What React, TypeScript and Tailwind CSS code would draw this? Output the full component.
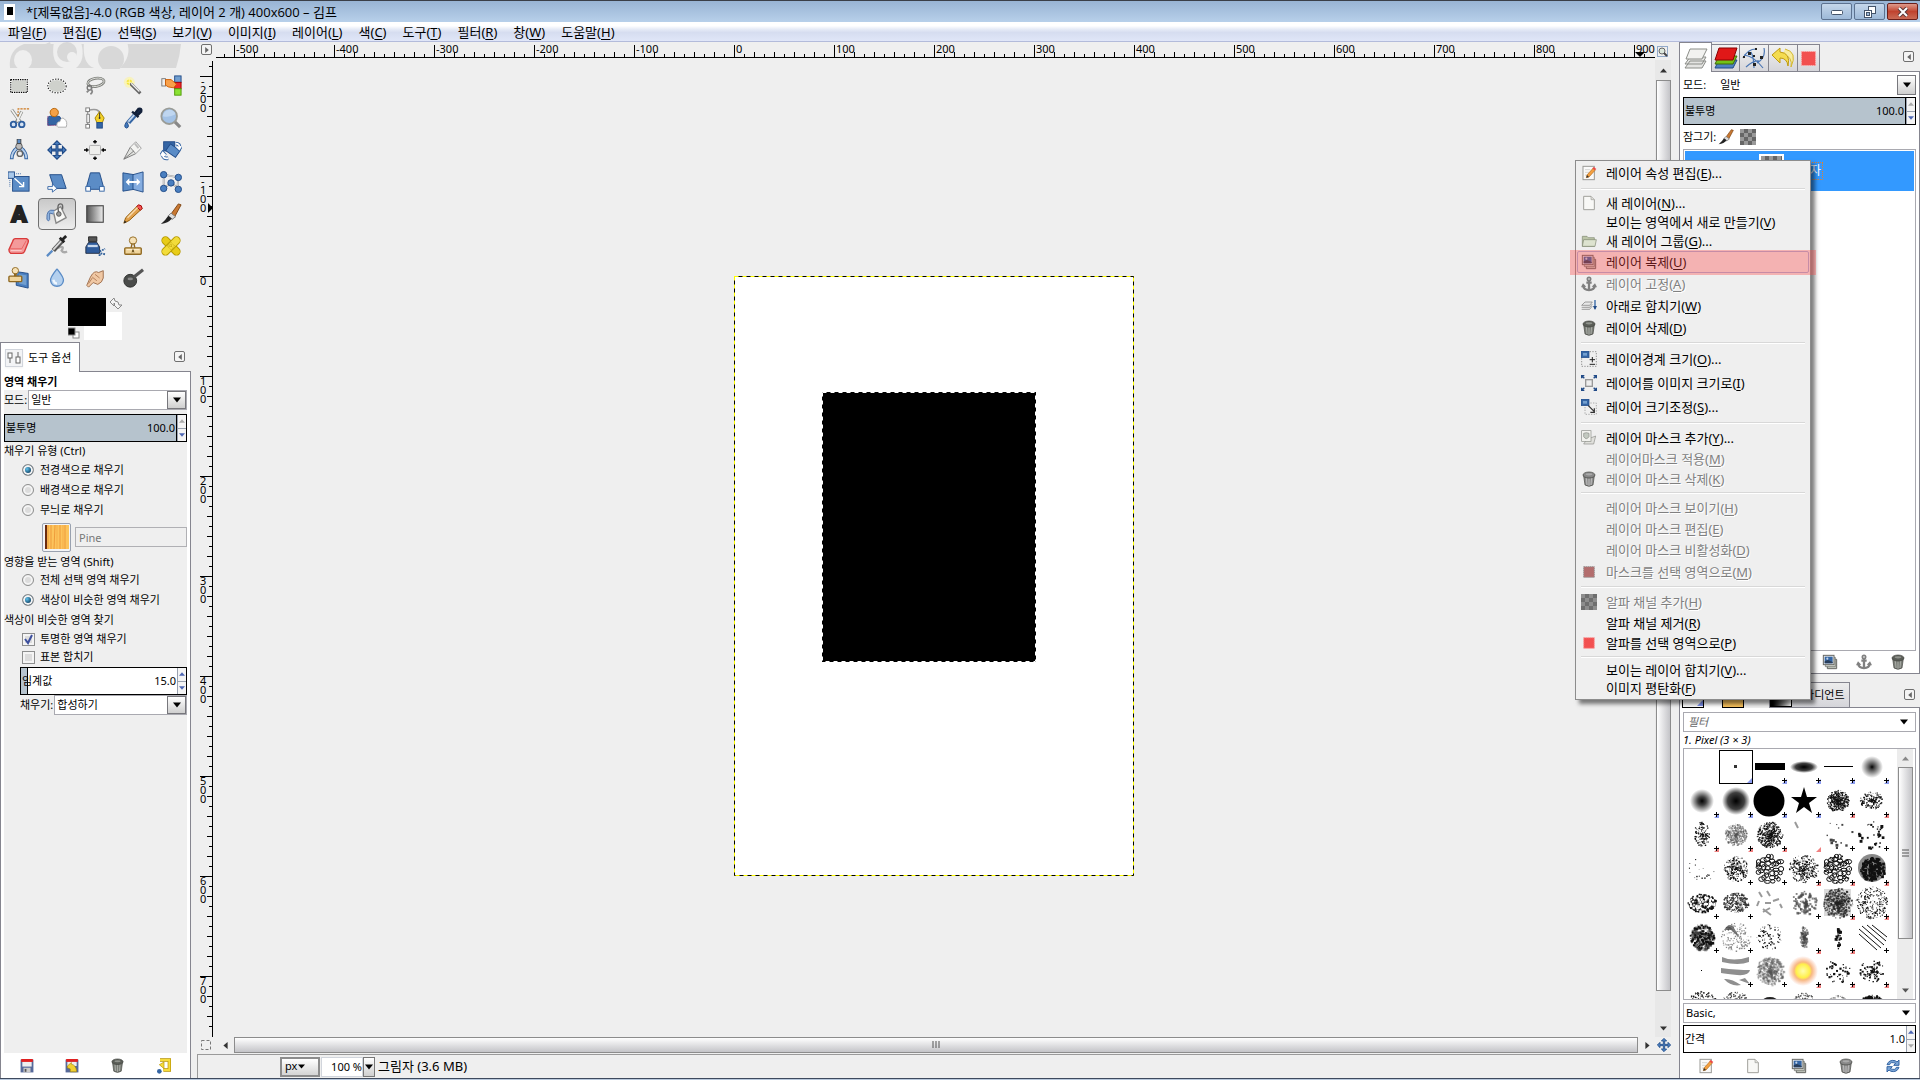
import React from 'react';

type Kids = { children: React.ReactNode };

const Svg: React.FC<Kids & { size?: number }> = ({ children, size = 24 }) => (
  <svg width={size} height={size} viewBox="0 0 24 24" fill="none" className="shrink-0" aria-hidden="true">
    {children}
  </svg>
);

/* ---------- small shared icons ---------- */

const TrashIcon: React.FC<{ size?: number; dim?: boolean }> = ({ size = 16, dim }) => (
  <Svg size={size}>
    <path d="M4 7 L6 21 Q12 25 18 21 L20 7 Z" fill={dim ? '#8f8f8f' : '#7b7e78'} stroke="#3f413d" />
    <path d="M8 10 L9 21 M12 11 V22 M16 10 L15 21" stroke={dim ? '#bbb' : '#a8aba5'} strokeWidth="1.500" />
    <ellipse cx="12" cy="6" rx="9" ry="4.500" fill={dim ? '#888' : '#5a5d57'} stroke="#3f413d" />
    <ellipse cx="12" cy="5" rx="5" ry="1.600" fill={dim ? '#aaa' : '#8f928c'} />
  </Svg>
);

const DuplicateIcon = () => (
  <Svg size={16}>
    <path d="M8 8 H22 V22 H8 Z" fill="#c3c7bf" stroke="#666864" strokeWidth="1.500" />
    <path d="M5 5 H20 V19 H5 Z" fill="#d3d7cf" stroke="#666864" />
    <rect x="2" y="2" width="16" height="14" fill="#eeeeec" stroke="#666864" strokeWidth="1.500" />
    <rect x="4" y="4" width="12" height="10" fill="#3465a4" />
    <path d="M4 11 L9 9 L16 12 V14 H4 Z" fill="#2a3f5c" />
    <circle cx="8" cy="7" r="1.600" fill="#c5d6ea" />
  </Svg>
);

const AnchorIcon = () => (
  <Svg size={16}>
    <circle cx="12" cy="4.500" r="2.500" stroke="#808080" strokeWidth="2.500" />
    <path d="M12 7 V21 M8 10 H16 M3 14 Q4 21 12 21 Q20 21 21 14" stroke="#808080" strokeWidth="3.500" />
    <path d="M0 17 L3 11 L8 16 Z M24 17 L21 11 L16 16 Z" fill="#808080" />
  </Svg>
);

const EditIcon = () => (
  <Svg size={16}>
    <rect x="3" y="2" width="17" height="20" fill="#fafafa" stroke="#9a9a96" strokeWidth="1.500" />
    <path d="M6 7 H14 M6 11 H12 M6 15 H10" stroke="#c4c4c0" />
    <path d="M8 19 L9 15 L18 5 L21 8 L12 18 Z" fill="#f5a040" stroke="#b06a1a" />
    <path d="M17 5 L19 3 L23 6 L21 8 Z" fill="#ef4444" />
    <path d="M8 19 L9 15 L12 18 Z" fill="#333" />
  </Svg>
);

const NewIcon = () => (
  <Svg size={16}>
    <path d="M4 2 H15 L20 7 V22 H4 Z" fill="#f8f8f6" stroke="#a0a09c" strokeWidth="1.500" />
    <path d="M15 2 V7 H20" fill="#dcdcd8" stroke="#a0a09c" />
  </Svg>
);

const FolderIcon = () => (
  <Svg size={16}>
    <path d="M2 5 H9 L11 7 H20 V20 H2 Z" fill="#bcc5a8" stroke="#7e8670" />
    <path d="M4 10 H23 L21 20 H2 Z" fill="#dde3cf" stroke="#7e8670" />
  </Svg>
);

const MergeIcon = () => (
  <Svg size={16}>
    <path d="M6 6 H17 L13 11 H1 Z M1 14 H13 L17 9 M1 17 H13 L17 12" fill="#e8e8e8" stroke="#777" />
    <path d="M21 3 V16" stroke="#3465a4" strokeWidth="2" />
    <path d="M18 12 H24 L21 18 Z" fill="#204a87" />
  </Svg>
);

const BoundsIcon = () => (
  <Svg size={16}>
    <rect x="1" y="1" width="22" height="22" stroke="#666" strokeDasharray="2 2" />
    <rect x="0" y="0" width="12" height="10" fill="#3465a4" stroke="#204a87" />
    <rect x="3" y="3" width="6" height="4" fill="#729fcf" />
    <path d="M17 9 V17 M13 13 H21 M13 20 H21" stroke="#222" strokeWidth="1.500" />
  </Svg>
);

const FitIcon = () => (
  <Svg size={16}>
    <path d="M1 5 V1 H5 M19 1 H23 V5 M23 19 V23 H19 M5 23 H1 V19 M1 1 L5 5 M23 1 L19 5 M23 23 L19 19 M1 23 L5 19" stroke="#204a87" strokeWidth="2" />
    <rect x="7" y="7" width="10" height="10" fill="#eee" stroke="#999" strokeWidth="2" />
  </Svg>
);

const ResizeIcon = () => (
  <Svg size={16}>
    <rect x="6" y="6" width="17" height="17" stroke="#888" strokeDasharray="2 2" />
    <rect x="0" y="0" width="12" height="10" fill="#3465a4" stroke="#204a87" />
    <rect x="3" y="3" width="6" height="4" fill="#729fcf" />
    <path d="M11 10 L20 19 M20 14 V20 H14" stroke="#333" strokeWidth="1.800" />
  </Svg>
);

const MaskIcon = () => (
  <Svg size={16}>
    <path d="M9 14 L22 9 L19 21 H4 Z" fill="#e0e0dc" stroke="#8b8d88" />
    <rect x="1" y="1" width="14" height="16" fill="#f2f2ee" stroke="#8b8d88" />
    <path d="M4 5 Q8 3 12 5 V10 Q8 16 4 10 Z" fill="#c3c9c0" stroke="#8b8d88" />
  </Svg>
);

const SelIcon: React.FC<{ dim?: boolean }> = ({ dim }) => (
  <Svg size={16}>
    <rect x="4" y="4" width="16" height="16" fill={dim ? '#b36d6d' : '#f25050'} stroke={dim ? '#999' : '#f9a0a0'} strokeWidth="1.500" strokeDasharray="2 1" />
  </Svg>
);

const CheckerIcon: React.FC<{ dim?: boolean }> = ({ dim }) => (
  <svg width="16" height="16" viewBox="0 0 8 8" className="shrink-0" aria-hidden="true">
    <rect width="8" height="8" fill={dim ? '#8d8d8d' : '#999'} />
    {Array.from({ length: 16 }).map((_, i) =>
      (i + (i >> 2)) % 2 ? <rect key={i} x={(i % 4) * 2} y={(i >> 2) * 2} width="2" height="2" fill={dim ? '#6e6e6e' : '#666'} /> : null
    )}
  </svg>
);

/* ---------- toolbox ---------- */

const blue = '#5b8cc6';
const navy = '#204a87';

const tools: { name: string; art: React.ReactNode }[] = [
  { name: '사각 선택', art: <><rect x="3" y="5" width="18" height="14" fill="#cfd1cc" stroke="#fff" strokeWidth="2" /><rect x="3" y="5" width="18" height="14" stroke="#000" strokeWidth="1.200" strokeDasharray="1.500 1" /></> },
  { name: '타원 선택', art: <><ellipse cx="12" cy="12" rx="10" ry="7.500" fill="#cfd1cc" stroke="#fff" strokeWidth="2" /><ellipse cx="12" cy="12" rx="10" ry="7.500" stroke="#222" strokeWidth="1.200" strokeDasharray="1.500 1.500" /></> },
  { name: '자유 선택', art: <><ellipse cx="13" cy="8" rx="9" ry="4.500" transform="rotate(-10 13 8)" stroke="#7d7f7a" strokeWidth="3" /><ellipse cx="13" cy="8" rx="9" ry="4.500" transform="rotate(-10 13 8)" stroke="#dfe0dc" /><circle cx="6" cy="14" r="2.500" stroke="#777" strokeWidth="1.500" /><path d="M6 16 L3 19 M7 15 Q11 18 7 21" stroke="#888" strokeWidth="2" /></> },
  { name: '퍼지 선택', art: <><circle cx="8" cy="8" r="6" fill="#fcf3a0" opacity=".6" /><circle cx="8" cy="8" r="3" fill="#f6e43c" /><path d="M9 9 L20 20" stroke="#666" strokeWidth="3.500" /><path d="M10 9 L19 18" stroke="#eee" strokeWidth="1.500" /><path d="M3 8 H13 M8 3 V13" stroke="#fff9a6" /></> },
  { name: '색상 선택', art: <><rect x="16" y="1" width="7" height="7" fill="#729fcf" stroke={navy} /><rect x="16" y="8" width="7" height="7" fill="#ef2929" stroke="#a40000" /><rect x="16" y="15" width="7" height="7" fill="#8ae234" stroke="#4e9a06" /><rect x="2" y="4" width="4" height="8" fill="#eee" stroke="#777" /><path d="M6 5 L12 5 L18 10 L15 14 L9 13 L6 11 Z" fill="#f8a04a" stroke="#ce5c00" /></> },
  { name: '가위 선택', art: <><path d="M4 3 L14 17 M15 5 L9 17" stroke="#8a8c87" strokeWidth="3.500" /><path d="M4 3 L13 16 M15 5 L10 16" stroke="#f2f2f0" strokeWidth="1.800" /><circle cx="6" cy="19" r="3" fill="#d6e3f3" stroke="#2f5f9f" strokeWidth="2" /><circle cx="15" cy="19" r="3" fill="#d6e3f3" stroke="#2f5f9f" strokeWidth="2" /><path d="M11 10 V2 H23" stroke="#ce7a20" strokeWidth="1.200" strokeDasharray="2.500 1" /></> },
  { name: '전경 선택', art: <><path d="M2 20 V12 Q2 10 5 10 H13 Q16 10 16 13 V19 Z" fill="#3465a4" stroke={navy} /><circle cx="9" cy="6" r="4.500" fill="#f5a146" stroke="#b35f00" /><path d="M12 21 Q11 16 15 16 Q17 10 20 13 Q24 16 22 22 H13 Z" fill="#fff" stroke="#aaa" /><path d="M2 20 H12 M2 10 V20" stroke="#a4508a" strokeDasharray="1.500 1" /></> },
  { name: '경로', art: <><path d="M4 4 V20 M4 4 Q16 0 18 8" stroke="#999" strokeWidth="1.500" /><rect x="2" y="1" width="4" height="4" fill="#fff" stroke="#777" /><rect x="2" y="19" width="4" height="4" fill="#fff" stroke="#777" /><rect x="3" y="8" width="3" height="9" fill="#eee" stroke="#888" /><path d="M17 5 L22 12 L20 17 H14 L12 12 Z" fill="#f4d22a" stroke="#a08000" /><path d="M17 6 V12" stroke="#333" /><circle cx="17" cy="12" r="1" fill="#333" /><rect x="14" y="17" width="6" height="6" fill="#3465a4" stroke={navy} /></> },
  { name: '색 추출', art: <><path d="M14 9 L7 17" stroke="#3465a4" strokeWidth="5" /><path d="M14 8 L7 16" stroke="#c3d7ef" strokeWidth="2" /><path d="M11 5 L18 11 M14 7 L18 2 Q22 1 21 5 L17 9 Z" fill="#1a2b4a" stroke="#12203a" strokeWidth="2.500" /><path d="M5 16 Q1 22 5 23 Q9 22 5 16" fill="#3f78bd" stroke={navy} /></> },
  { name: '확대', art: <><path d="M16 16 L22 22" stroke="#888" strokeWidth="3.500" /><circle cx="10" cy="10" r="8.500" fill="#a3c2e6" stroke="#9a9c97" strokeWidth="2" /><path d="M3 10 Q10 12 17 8 Q15 3 10 3 Q4 4 3 10" fill="#bfd6f0" /></> },
  { name: '측정', art: <><path d="M11 9 Q4 14 4 22 M13 9 Q20 14 20 22" stroke="#3465a4" strokeWidth="4" /><path d="M11 9 Q4 14 4 21 M13 9 Q20 14 20 21" stroke="#b8cfea" strokeWidth="2" /><circle cx="12" cy="8" r="3.500" fill="#bbb" stroke="#555" /><rect x="10" y="0" width="4" height="5" fill={blue} stroke="#444" /><circle cx="13" cy="16" r="3" fill="#eee" stroke="#666" strokeWidth="1.500" /></> },
  { name: '이동', art: <><path d="M12 2 L16 6 H13 V11 H18 V8 L22 12 L18 16 V13 H13 V18 H16 L12 22 L8 18 H11 V13 H6 V16 L2 12 L6 8 V11 H11 V6 H8 Z" fill="#4a7fc0" stroke={navy} strokeWidth="1.200" /></> },
  { name: '정렬', art: <><rect x="6" y="7" width="12" height="10" rx="1" fill="#eeeeec" stroke="#aaa" /><path d="M12 1 V5 M10 3 H14 M12 19 V23 M10 21 H14 M0 12 H5 M3 10 V14 M19 12 H24 M21 10 V14" stroke="#000" strokeWidth="1.500" /></> },
  { name: '자르기', art: <><path d="M2 22 L9 9 L15 16 Z" fill="#e2e3e0" stroke="#777" /><path d="M9 9 L15 3 L21 10 L15 16 Z" fill="#f4f4f2" stroke="#999" /><path d="M2 22 L13 13" stroke="#777" /><path d="M14 5 L18 10" stroke="#bbb" strokeWidth="2" /></> },
  { name: '회전', art: <><rect x="4" y="3" width="12" height="10" fill="#3465a4" stroke={navy} /><rect x="8" y="8" width="13" height="9" transform="rotate(35 14 12)" fill={blue} stroke={navy} /><path d="M17 5 Q22 5 21 10 M18 8 L21 11 L23 8 M9 21 Q3 22 3 17 M1 18 L3 15 L6 18" stroke="#3465a4" strokeWidth="4" /><path d="M17 5 Q22 5 21 10 M18 8 L21 11 L23 8 M9 21 Q3 22 3 17 M1 18 L3 15 L6 18" stroke="#fff" strokeWidth="2" /></> },
  { name: '크기', art: <><rect x="5" y="6" width="18" height="16" fill={blue} stroke={navy} /><rect x="0" y="1" width="7" height="7" fill="#a9c8ea" stroke={navy} /><path d="M7 8 L17 17 M17 12 V17 H12" stroke="#fff" strokeWidth="1.500" /><path d="M9 3 H15 M2 10 V17" stroke="#3465a4" strokeDasharray="1 1" /></> },
  { name: '기울이기', art: <><path d="M4 4 H17 L22 19 H9 Z" fill={blue} stroke={navy} /><path d="M2 17 H7 V14 L12 19 L7 23 V20 H2 Z" fill="#fff" stroke="#3465a4" /></> },
  { name: '원근', art: <><path d="M7 2 H17 L22 20 H2 Z" fill={blue} stroke={navy} /><rect x="2" y="17" width="5" height="5" fill="#fff" stroke="#3465a4" /><rect x="17" y="17" width="5" height="5" fill="#fff" stroke="#3465a4" /></> },
  { name: '뒤집기', art: <><path d="M1 2 L13 4 V20 L1 22 Z" fill={blue} stroke={navy} /><path d="M12 4 L23 1 V23 L12 20 Z" fill="#85ade0" stroke={navy} /><path d="M4 12 L8 8 V11 H16 V8 L20 12 L16 16 V13 H8 V16 Z" fill="#fff" /></> },
  { name: '케이지', art: <><path d="M4 4 L20 7 L19 18 L12 13 L4 19 Z" stroke="#999" strokeWidth="2" /><path d="M4 4 L20 7 L19 18 L12 13 L4 19 Z" stroke="#ddd" /><circle cx="4" cy="4" r="3.500" fill="#4a7fc0" stroke={navy} /><circle cx="20" cy="7" r="3.500" fill="#4a7fc0" stroke={navy} /><circle cx="12" cy="13" r="3.500" fill="#4a7fc0" stroke={navy} /><circle cx="4" cy="19" r="3.500" fill="#4a7fc0" stroke={navy} /><circle cx="20" cy="20" r="3.500" fill="#4a7fc0" stroke={navy} /></> },
  { name: '텍스트', art: <text x="12" y="21" textAnchor="middle" fontSize="25" fontWeight="900" fontFamily="Roboto, sans-serif" fill="#222" stroke="#222" strokeWidth="2">A</text> },
  { name: '영역 채우기', art: <><path d="M8 9 L16 4 L22 16 L11 22 Z" fill="#f8f8f6" stroke="#888" strokeWidth="1.500" /><path d="M14 12 L13 5 Q13 1 16 1 Q19 1 18 7" stroke="#666" strokeWidth="1.500" /><circle cx="14" cy="12" r="2.500" fill="#999" stroke="#555" /><path d="M9 8 Q0 6 1 18 Q3 21 4 18 V11 L8 12" fill="#8fb3df" stroke="#4a6fa5" /></> },
  { name: '혼합', art: <><defs><linearGradient id="toolGrad"><stop stopColor="#555" /><stop offset="1" stopColor="#eee" /></linearGradient></defs><rect x="3" y="3" width="18" height="18" fill="url(#toolGrad)" stroke="#444" strokeWidth="1.200" /></> },
  { name: '연필', art: <><path d="M2 22 L4 16 L17 3 Q20 2 22 6 L8 19 Z" fill="#e0a04c" stroke="#8f5902" /><path d="M16 4 L20 8 L22 6 Q22 2 18 2 Z" fill="#ef5555" stroke="#a40000" /><path d="M2 22 L3 19 L5 21 Z" fill="#222" /><path d="M6 16 L17 5" stroke="#f8dcae" strokeWidth="1.500" /></> },
  { name: '붓', art: <><path d="M12 12 L20 1 L23 2 L16 15 Z" fill="#c87832" stroke="#7c4310" /><path d="M9 14 L12 11 L17 15 L13 18 Z" fill="#ddd" stroke="#777" /><path d="M9 14 L13 17 Q9 22 1 23 Q6 19 9 14" fill="#222" /></> },
  { name: '지우개', art: <><path d="M8 4 H20 Q23 5 22 8 L18 18 Q17 20 15 20 H3 Q1 19 1 16 L5 7 Q6 4 8 4" fill="#f49a9a" stroke="#d83a3a" strokeWidth="1.500" /><path d="M2 15 H15 L20 6" stroke="#e86060" /><path d="M3 17 H15" stroke="#fbd0d0" /></> },
  { name: '에어브러시', art: <><path d="M13 14 Q21 11 17 17 Q19 20 23 18" stroke="#aaa" strokeWidth="2.500" /><path d="M8 17 L18 6" stroke="#555" strokeWidth="5" /><path d="M8 16 L18 5" stroke="#d8d8d8" strokeWidth="2" /><path d="M15 3 L20 8 M17 6 L22 1" stroke="#222" strokeWidth="3" /><path d="M7 17 L1 23" stroke="#5b8cc6" strokeWidth="2.500" /></> },
  { name: '잉크', art: <><path d="M5 2 H14 V7 H5 Z" fill="#555" stroke="#222" /><path d="M5 8 H14 L17 13 V20 H2 V13 Z" fill="#2f5c9c" stroke="#222e44" /><path d="M4 12 H15" stroke="#c8d8ed" strokeWidth="2.500" /><path d="M17 18 L23 15 M18 20 L23 21 M16 22 H19" stroke="#2f5f9a" strokeWidth="2" strokeDasharray="2 1" /></> },
  { name: '복제', art: <><circle cx="12" cy="6" r="4" fill="#f6e2b8" stroke="#8f6820" /><path d="M11 9 L10 14 M13 9 L14 14" stroke="#8f6820" strokeWidth="1.500" /><rect x="3" y="14" width="18" height="7" rx="1" fill="#f0d59c" stroke="#8f6820" strokeWidth="1.500" /><path d="M5 16 H19" stroke="#fff3d6" /><path d="M11 19 L12 16 L13 19" stroke="#5a3f0c" /></> },
  { name: '치료', art: <><path d="M6 6 L18 18" stroke="#b79a00" strokeWidth="9" strokeLinecap="round" /><path d="M6 6 L18 18" stroke="#e8cc18" strokeWidth="7" strokeLinecap="round" /><path d="M18 6 L6 18" stroke="#b79a00" strokeWidth="9" strokeLinecap="round" /><path d="M18 6 L6 18" stroke="#f2dc3a" strokeWidth="7" strokeLinecap="round" /><path d="M8 12 L12 8 L16 12 L12 16 Z M10 12 H14 M12 10 V14" stroke="#b79a00" strokeDasharray="1 1" /></> },
  { name: '원근 복제', art: <><path d="M9 5 L22 7 V23 L9 20 V14" fill="#4a7fc0" stroke={navy} /><path d="M12 8 L20 9 V20 L12 18" fill="#729fcf" /><circle cx="8" cy="4" r="3.500" fill="#f6e2b8" stroke="#8f6820" /><path d="M8 7 V11" stroke="#8f6820" strokeWidth="3" /><rect x="1" y="10" width="14" height="6" rx="1" fill="#f0d59c" stroke="#8f6820" strokeWidth="1.500" /></> },
  { name: '흐리기', art: <><path d="M12 2 Q20 12 19 15 Q18 21 12 21 Q6 21 5 15 Q4 12 12 2" fill="#b4d0ee" stroke="#5b8cc6" strokeWidth="1.500" /><path d="M8 14 Q9 18 12 18" stroke="#f0f7ff" strokeWidth="2.500" /></> },
  { name: '문지르기', art: <><path d="M3 20 L7 11 Q11 3 16 6 L21 4 L21 12 Q20 17 15 19 L10 17 L5 22 Z" fill="#f0c8a4" stroke="#9b6a48" /><path d="M9 11 L14 15 M12 8 L17 12 M5 18 L9 12" stroke="#b07c58" /></> },
  { name: '닷지', art: <><circle cx="9" cy="15" r="7" fill="#4a4c4a" stroke="#2c2e2c" /><path d="M13 11 L23 3" stroke="#555" strokeWidth="3.500" /><ellipse cx="9" cy="13" rx="3" ry="1.500" fill="#888" /></> },
];

/* ---------- form bits ---------- */

const Arrow: React.FC<{ dir?: 'up' | 'down' | 'left' | 'right'; color?: string; size?: number }> = ({ dir = 'down', color = '#000', size = 10 }) => {
  const d = { down: 'M0 2 H10 L5 8 Z', up: 'M0 8 H10 L5 2 Z', left: 'M8 0 V10 L2 5 Z', right: 'M2 0 V10 L8 5 Z' }[dir];
  return (
    <svg width={size} height={size} viewBox="0 0 10 10" className="shrink-0" aria-hidden="true">
      <path d={d} fill={color} />
    </svg>
  );
};

const Spin: React.FC<{ label: string; value: string; fill?: string; upColor?: string; downColor?: string }> = ({
  label, value, fill = '', upColor = '#4d66b3', downColor = '#4d66b3',
}) => (
  <label className="flex h-7 flex-1 min-w-0 border border-black bg-white">
    <span className={`flex flex-1 min-w-0 items-center pl-px pr-px ${fill}`}>
      <span className="whitespace-nowrap">{label}</span>
      <input className="w-full min-w-0 bg-transparent text-right outline-none" defaultValue={value} />
    </span>
    <span className="flex w-[9px] flex-col border-l border-gray-400 bg-[#f4f4f4]">
      <button aria-label="증가" className="flex flex-1 items-center justify-center border-b border-gray-400"><Arrow dir="up" size={6} color={upColor} /></button>
      <button aria-label="감소" className="flex flex-1 items-center justify-center"><Arrow size={6} color={downColor} /></button>
    </span>
  </label>
);

const Combo: React.FC<{ id: string; value: string; boxed?: boolean; framed?: boolean }> = ({ id, value, boxed = true, framed = true }) => (
  <div className={`grid h-5 min-w-0 flex-1 bg-white ${framed ? 'border border-[#a9a9b0]' : ''}`}>
    <select id={id} aria-label={value} className="col-start-1 row-start-1 w-full appearance-none bg-transparent pl-[2px] outline-none">
      <option>{value}</option>
    </select>
    <span className={`pointer-events-none col-start-1 row-start-1 flex w-[19px] items-center justify-center justify-self-end ${boxed ? 'border border-[#77777c] bg-linear-to-b from-white to-[#cfcfcf]' : ''}`}>
      <Arrow size={8} />
    </span>
  </div>
);

const Radio: React.FC<{ name: string; label: string; on?: boolean }> = ({ name, label, on }) => (
  <label className="flex h-5 items-center gap-[6px] pl-[18px]">
    <input
      type="radio" name={name} defaultChecked={on}
      className="h-3 w-3 appearance-none rounded-full border border-[#8e8f8f] bg-[#dcdcdc] inset-ring-2 inset-ring-[#f4f4f4] checked:bg-[radial-gradient(circle_at_40%_40%,#5fc3ee,#0a3556_60%)]"
    />
    {label}
  </label>
);

const Check: React.FC<{ label: string; on?: boolean }> = ({ label, on }) => (
  <label className="flex h-[18px] items-center gap-[5px] pl-[18px]">
    <span className="grid h-[13px] w-[13px]">
      <input type="checkbox" defaultChecked={on} className="col-start-1 row-start-1 h-[13px] w-[13px] appearance-none border border-[#8e8f8f] bg-[#dcdcdc] inset-ring-2 inset-ring-[#f4f4f4]" />
      {on && (
        <svg viewBox="0 0 13 13" className="pointer-events-none col-start-1 row-start-1" aria-hidden="true">
          <path d="M3 6 L6 10 L10 2" fill="none" stroke="#3c4f9e" strokeWidth="2" />
        </svg>
      )}
    </span>
    {label}
  </label>
);

const Collapse: React.FC<{ dir?: 'left' | 'right' }> = ({ dir = 'left' }) => (
  <button aria-label="탭 메뉴" className="flex h-[11px] w-[11px] items-center justify-center rounded-xs border border-[#6f6f6f] bg-[#f4f4f4]">
    <Arrow dir={dir} size={6} color="#666" />
  </button>
);

/* ---------- left dock ---------- */

const LeftDock = () => (
  <aside className="flex w-[191px] shrink-0 flex-col text-[11px]">
    <svg width="191" height="27" viewBox="0 0 191 27" aria-hidden="true">
      <path d="M10 26 Q8 8 24 2 H181 Q180 14 176 26 Z" fill="#d8d8d8" />
      <ellipse cx="23" cy="18" rx="9" ry="10" fill="#efefef" />
      <path d="M40 26 Q33 18 32 8 L50 0 L54 12 Q56 22 64 26 Z" fill="#d8d8d8" />
      <path d="M54 0 Q50 22 64 26 H76 Q86 18 81 0 Z" fill="#efefef" />
      <circle cx="67" cy="10" r="10" fill="#d8d8d8" />
      <circle cx="72" cy="15" r="5" fill="#efefef" />
      <path d="M84 0 Q82 22 94 26 H120 Q132 14 127 0 Z" fill="#efefef" />
      <circle cx="111" cy="17" r="13" fill="#d8d8d8" />
    </svg>
    <div className="grid h-[228px] w-[190px] grid-cols-5 auto-rows-[32px] pt-[1px]">
      {tools.map((tool) => (
        <button
          key={tool.name}
          aria-label={tool.name}
          className={`flex items-center justify-center ${tool.name === '영역 채우기' ? 'rounded border border-[#707070] bg-linear-to-b from-[#c9c9c9] to-[#ededed]' : ''}`}
        >
          <Svg size={22}>{tool.art}</Svg>
        </button>
      ))}
    </div>
    <div className="h-[45px] pl-[68px]">
      <svg width="56" height="44" viewBox="0 0 56 44" aria-hidden="true">
        <rect x="16" y="15" width="38" height="28" fill="#fff" />
        <rect x="0" y="1" width="38" height="28" fill="#000" />
        <path d="M42 5 L46 1 L47 4 Q51 4 51 8 L54 8 L50 12 L46 8 Q48 7 46 6 L46 9 Z" fill="#f4f4f4" stroke="#888" />
        <rect x="5" y="35" width="6" height="6" fill="#fff" stroke="#888" />
        <rect x="0" y="31" width="7" height="7" fill="#000" stroke="#888" />
      </svg>
    </div>

    <div className="flex h-[30px] shrink-0 items-stretch">
      <div className="flex w-20 items-center gap-1 border-x border-t border-[#85858f] bg-white pl-1 pt-px">
        <span className="flex h-[18px] w-[18px] items-center justify-center border border-gray-300 bg-gray-100 shadow-xs">
          <svg width="14" height="14" viewBox="0 0 14 14" fill="#fff" stroke="#666" aria-hidden="true">
            <rect x="1" y="2" width="4" height="5" /><path d="M3 7 V12" /><rect x="9" y="6" width="4" height="6" /><path d="M11 6 V1" />
          </svg>
        </span>
        <span className="whitespace-nowrap pl-px">도구 옵션</span>
      </div>
      <div className="flex flex-1 items-center justify-end border-b border-[#85858f] pr-[6px]"><Collapse /></div>
    </div>

    <section className="flex min-h-0 flex-1 flex-col border-x border-[#85858f] bg-white px-[3px]">
      <h2 className="h-[18px] pt-[2px] font-bold leading-4">영역 채우기</h2>
      <div className="flex min-h-0 flex-1 flex-col bg-[#efefef] leading-4">
        <div className="flex h-5 items-center gap-px">
          <label htmlFor="mode">모드:</label>
          <Combo id="mode" value="일반" />
        </div>
        <div className="mt-1 flex"><Spin label="불투명" value="100.0" fill="bg-[#b6c3cd] border-r border-black" upColor="#aaa" /></div>
        <fieldset className="min-w-0">
          <legend className="h-[18px] pt-px">채우기 유형 (Ctrl)</legend>
          <Radio name="fill" label="전경색으로 채우기" on />
          <Radio name="fill" label="배경색으로 채우기" />
          <Radio name="fill" label="무늬로 채우기" />
          <div className="flex h-[34px] items-center gap-1 pl-[38px]">
            <button aria-label="무늬" className="flex h-[29px] w-[29px] shrink-0 items-center justify-center rounded-xs border border-gray-400 bg-gray-100">
              <svg width="24" height="24" viewBox="0 0 24 24" aria-hidden="true">
                <rect width="24" height="24" fill="#fcc45c" />
                <rect width="2" height="24" fill="#6a2c10" />
                <path d="M3 0 V24 M6 0 V24 M10 0 L9 24 M15 0 V24 M20 0 V24" stroke="#ee9a3a" />
                <path d="M12 0 V24 M18 0 V24" stroke="#f7ad48" />
              </svg>
            </button>
            <input aria-label="무늬 이름" defaultValue="Pine" className="h-5 w-full min-w-0 flex-1 border border-[#b0b0b4] bg-transparent pl-[3px] text-[#777] outline-none" />
          </div>
        </fieldset>
        <fieldset className="min-w-0">
          <legend className="h-4">영향을 받는 영역 (Shift)</legend>
          <Radio name="area" label="전체 선택 영역 채우기" />
          <Radio name="area" label="색상이 비슷한 영역 채우기" on />
        </fieldset>
        <p className="h-5 pt-[2px]">색상이 비슷한 영역 찾기</p>
        <Check label="투명한 영역 채우기" on />
        <Check label="표본 합치기" />
        <div className="mt-px flex pl-4"><Spin label="임계값" value="15.0" fill="bg-[linear-gradient(to_right,#b6c3cd_6px,#000_6px,#000_7px,#fff_7px)]" /></div>
        <div className="flex h-5 items-center gap-px pl-4">
          <label htmlFor="fillby">채우기:</label>
          <Combo id="fillby" value="합성하기" />
        </div>
      </div>
      <div className="flex h-[25px] shrink-0 items-center justify-around">
        <button aria-label="저장">
          <Svg size={14}><rect x="1" y="1" width="22" height="22" fill="#56699a" /><rect x="4" y="1" width="16" height="12" fill="#eee" /><rect x="2" y="0" width="20" height="5" fill="#e02020" /><rect x="6" y="15" width="12" height="8" fill="#ccc" /><rect x="8" y="17" width="3" height="5" fill="#555" /></Svg>
        </button>
        <button aria-label="복원">
          <Svg size={14}><rect x="1" y="1" width="22" height="22" fill="#56699a" /><rect x="2" y="0" width="20" height="5" fill="#e02020" /><rect x="4" y="5" width="16" height="7" fill="#eee" /><path d="M4 12 L11 6 V9 Q19 10 20 22 H9 V17 L4 15 Z" fill="#f0d030" stroke="#a08000" /></Svg>
        </button>
        <button aria-label="삭제"><TrashIcon size={15} /></button>
        <button aria-label="초기화">
          <Svg size={16}><path d="M6 3 H20 V18 H11" stroke="#b89400" strokeWidth="5" /><path d="M6 3 H20 V18 H11" stroke="#f6dc3a" strokeWidth="3" /><path d="M5 10 L12 6 V16 Z" fill="#f6dc3a" stroke="#b89400" /><circle cx="5" cy="20" r="3.500" fill="#3465a4" /></Svg>
        </button>
      </div>
    </section>
  </aside>
);

/* ---------- image window ---------- */

const HRuler = () => {
  const marks = Array.from({ length: 144 }, (_, i) => (i - 52) * 10);
  return (
    <svg className="h-[18px] min-w-0 flex-1" aria-label="가로 눈금자">
      <rect x="1" y="15" width="100%" height="1" fill="#000" />
      {marks.map((m) => {
        const x = m + 519;
        const len = m % 100 === 0 ? 12 : m % 20 === 0 ? 5 : 3;
        return <rect key={m} x={x} y={15 - len} width="1" height={len} fill="#000" />;
      })}
      {marks.filter((m) => m % 100 === 0).map((m) => (
        <text key={m} x={m + 521} y="11" fontSize="11">{m}</text>
      ))}
      <path d="M1420 10 H1430 L1425 15 Z" />
    </svg>
  );
};

const VRuler = () => {
  const marks = Array.from({ length: 97 }, (_, i) => (i - 21) * 10);
  return (
    <svg className="h-full w-[22px] shrink-0" aria-label="세로 눈금자">
      <rect x="21" y="1" width="1" height="100%" fill="#000" />
      {marks.map((m) => {
        const len = m % 100 === 0 ? 12 : m % 20 === 0 ? 5 : 3;
        return <rect key={m} x={21 - len} y={m + 216} width={len} height="1" fill="#000" />;
      })}
      {marks.filter((m) => m % 100 === 0).map((m) => (
        <text key={m} fontSize="11">
          {String(m).split('').map((c, i) => (
            <tspan key={i} x={c === '-' ? 10 : 9} y={m + 225 + i * 9}>{c}</tspan>
          ))}
        </text>
      ))}
      <path d="M17 143 V153 L22 148 Z" />
    </svg>
  );
};

const Canvas = () => (
  <div className="relative min-w-0 flex-1">
    <svg width="402" height="602" viewBox="-1 -1 402 602" className="absolute top-[215px] left-[520px]" aria-label="이미지">
      <rect width="400" height="600" fill="#fff" />
      <rect x=".5" y=".5" width="399" height="599" fill="none" stroke="#ff0" />
      <rect x=".5" y=".5" width="399" height="599" fill="none" stroke="#000" strokeDasharray="4 4" strokeDashoffset="4" />
      <rect x="88" y="116" width="214" height="270" fill="#000" />
      <rect x="88.500" y="116.500" width="213" height="269" fill="none" stroke="#fff" strokeDasharray="4 4" />
    </svg>
  </div>
);

const grip = (
  <svg width="8" height="8" viewBox="0 0 8 8" aria-hidden="true"><path d="M1 0 V7 M4 0 V7 M7 0 V7" stroke="#555" /></svg>
);

const ImageWindow = () => (
  <main className="flex min-w-0 flex-1 flex-col">
    <div className="flex h-[18px] shrink-0">
      <div className="flex w-6 items-start justify-end pr-[3px] pt-[2px]"><Collapse dir="right" /></div>
      <HRuler />
      <div className="flex w-6 items-center justify-start pl-[2px]">
        <svg width="11" height="11" viewBox="0 0 11 11" fill="none" aria-hidden="true"><rect x=".5" y=".5" width="10" height="10" stroke="#3465a4" strokeDasharray="1 1" /><circle cx="5" cy="5" r="3" fill="#dde8dd" stroke="#666" /><path d="M7 7 L10 10" stroke="#444" strokeWidth="2" /></svg>
      </div>
    </div>
    <div className="flex min-h-0 flex-1">
      <VRuler />
      <Canvas />
      <div className="mr-2 flex w-4 flex-col items-center bg-[#e8e8e8]">
        <button aria-label="위로" className="flex h-5 items-center"><Arrow dir="up" size={7} color="#333" /></button>
        <div className="w-[15px] flex-1 border border-[#8c8c8c] bg-linear-to-r from-white to-[#c4c4c8]" />
        <div className="h-[28px]" />
        <button aria-label="아래로" className="flex h-[18px] items-center"><Arrow size={7} color="#333" /></button>
      </div>
    </div>
    <div className="flex h-4 shrink-0">
      <div className="flex w-[25px] items-center justify-end pr-[5px]">
        <svg width="10" height="10" viewBox="0 0 10 10" aria-hidden="true"><rect x=".5" y=".5" width="9" height="9" fill="none" stroke="#777" strokeDasharray="3 2" /></svg>
      </div>
      <button aria-label="왼쪽으로" className="flex w-[18px] items-center justify-center"><Arrow dir="left" size={7} color="#333" /></button>
      <div className="flex flex-1 items-center justify-center border border-[#8c8c8c] bg-linear-to-b from-white to-[#c4c4c8]">{grip}</div>
      <button aria-label="오른쪽으로" className="flex w-[18px] items-center justify-center"><Arrow dir="right" size={7} color="#333" /></button>
      <button aria-label="탐색" className="flex w-[23px] items-center justify-start"><Svg size={16}>{tools[11].art}</Svg></button>
    </div>
    <div className="ml-[6px] mr-2 mt-px flex h-6 shrink-0 items-center border-l border-t border-[#9a9a9a] pl-[82px]">
      <button className="flex h-5 w-10 items-center gap-px border-2 border-[#8c8c8c] bg-linear-to-b from-white to-[#d4d4d4] pl-[3px] text-[11px]">px<Arrow size={7} /></button>
      <input aria-label="확대 비율" defaultValue="100 %" className="ml-px h-5 w-[42px] border border-gray-300 bg-white text-right text-[11px] outline-none" />
      <button aria-label="확대 목록" className="flex h-5 w-3 items-center justify-center border border-[#777] bg-linear-to-b from-white to-[#cfcfcf]"><Arrow size={8} /></button>
      <span className="ml-[3px] text-[13px]">그림자 (3.6 MB)</span>
    </div>
  </main>
);

/* ---------- right dock ---------- */

const noise = (seed: number) => {
  let s = (seed * 48271 * 31 + 12345) % 2147483647;
  const next = () => {
    s = (s * 16807) % 2147483647;
    return s / 2147483647;
  };
  for (let i = 0; i < 5; i++) next();
  return next;
};

const Speckle: React.FC<{ seed: number; n: number; rx?: number; ry?: number; size?: number; color?: string; even?: boolean }> = ({
  seed, n, rx = 14, ry = 14, size = 1, color = '#111', even,
}) => {
  const rnd = noise(seed);
  return (
    <g fill={color}>
      {Array.from({ length: n }).map((_, i) => {
        const a = rnd() * Math.PI * 2;
        const r = even ? Math.sqrt(rnd()) : Math.pow(rnd(), 0.8);
        const w = size * (0.5 + rnd());
        return <rect key={i} x={16.5 + Math.cos(a) * r * rx} y={16.5 + Math.sin(a) * r * ry} width={w} height={w} />;
      })}
    </g>
  );
};

const Soft: React.FC<{ id: string; r: number; mid?: string; rx?: number }> = ({ id, r, mid = '30%', rx }) => (
  <>
    <defs><radialGradient id={id}><stop offset="0" stopColor="#000" /><stop offset={mid} stopColor="#000" stopOpacity=".75" /><stop offset="1" stopColor="#000" stopOpacity="0" /></radialGradient></defs>
    <ellipse cx="17" cy="17" rx={rx ?? r} ry={r} fill={`url(#${id})`} />
  </>
);

const Cells = () => {
  const rnd = noise(77);
  return (
    <g fill="none" stroke="#111">
      {[4, 8, 12, 16, 20, 24, 28].map((y) =>
        [4, 9, 14, 19, 24, 28].map((x) => {
          const cx = x + rnd() * 3 - 1;
          const cy = y + rnd() * 3 - 1;
          const rx = 1.6 + rnd() * 1.4;
          const ry = 1.4 + rnd() * 1.2;
          return Math.hypot(cx - 16, cy - 17) < 14 ? <ellipse key={`${x}-${y}`} cx={cx} cy={cy} rx={rx} ry={ry} /> : null;
        })
      )}
    </g>
  );
};

// mark: b = blue corner, r = red corner, t = red corner without plus, k = plus only
const brushes: { art: React.ReactNode; mark: string }[] = [
  { art: null, mark: '' },
  { art: <><rect x=".5" y=".5" width="33" height="33" fill="#fff" stroke="#000" /><rect x="15" y="15" width="3" height="3" fill="#333" /><path d="M28 33 H33 V28 Z" fill="#8c9cf0" /></>, mark: '' },
  { art: <rect x="2" y="13" width="30" height="7" fill="#000" />, mark: 'b' },
  { art: <Soft id="b3" r={6} rx={14} mid="60%" />, mark: 'b' },
  { art: <rect x="3" y="16" width="29" height="1" fill="#000" />, mark: 'b' },
  { art: <Soft id="b5" r={11} mid="20%" />, mark: 'b' },
  { art: <Soft id="b6" r={12} mid="35%" />, mark: 'b' },
  { art: <Soft id="b7" r={14} mid="60%" />, mark: 'b' },
  { art: <circle cx="16" cy="17" r="15.500" fill="#000" />, mark: 'b' },
  { art: <path d="M17 3 L20 13 H30 L22 19 L25 29 L17 23 L9 29 L12 19 L4 13 H14 Z" fill="#000" />, mark: 'b' },
  { art: <Speckle seed={3} n={440} rx={11} ry={11} />, mark: 'r' },
  { art: <Speckle seed={4} n={150} rx={12} ry={9} />, mark: 'r' },
  { art: <Speckle seed={5} n={140} rx={8} ry={13} />, mark: 'r' },
  { art: <Speckle seed={6} n={500} rx={11} ry={11} color="#55555588" />, mark: 'r' },
  { art: <Speckle seed={7} n={440} rx={13} ry={13} />, mark: 'r' },
  { art: <path d="M8 4 L11 10" stroke="#999" strokeWidth="2" />, mark: 't' },
  { art: <Speckle seed={9} n={14} rx={15} ry={14} size={2} even color="#444" />, mark: 'k' },
  { art: <Speckle seed={10} n={30} rx={14} ry={14} size={2} even />, mark: 'k' },
  { art: <Speckle seed={11} n={18} rx={14} ry={13} even />, mark: '' },
  { art: <Speckle seed={12} n={240} rx={12} ry={13} />, mark: 'k' },
  { art: <Cells />, mark: 'k' },
  { art: <Speckle seed={14} n={300} rx={15} ry={14} />, mark: 'r' },
  { art: <><Cells /><Speckle seed={15} n={60} rx={14} ry={14} even /></>, mark: 'r' },
  { art: <><circle cx="17" cy="16" r="14" fill="#8a8a8a" /><Speckle seed={16} n={190} rx={13} ry={12} size={2} /></>, mark: 'r' },
  { art: <><Speckle seed={17} n={230} rx={14} ry={9} size={1.5} even /><Speckle seed={57} n={80} rx={13} ry={8} size={1.5} even color="#fff" /></>, mark: 'k' },
  { art: <Speckle seed={18} n={300} rx={13} ry={10} even color="#333" />, mark: 'k' },
  { art: <path d="M6 6 L9 11 M14 5 L17 10 M4 20 L6 15 M12 17 H18 M20 15 L26 13 M27 18 L29 22 M10 26 L17 22 M10 23 L18 29" stroke="#999" strokeWidth="2" />, mark: '' },
  { art: <Speckle seed={20} n={90} rx={13} ry={12} size={2} color="#444a" />, mark: 'k' },
  { art: <><rect x="3" y="3" width="27" height="27" fill="#bbb8" /><Speckle seed={21} n={500} rx={15} ry={15} color="#222a" size={1.3} /></>, mark: 'r' },
  { art: <Speckle seed={22} n={260} rx={16} ry={16} size={0.9} even />, mark: 'r' },
  { art: <><Speckle seed={23} n={220} rx={12} ry={13} size={2} even color="#2226" /><Speckle seed={63} n={140} rx={12} ry={12} size={1.5} even color="#111" /></>, mark: 'k' },
  { art: <><Speckle seed={24} n={150} rx={15} ry={14} even color="#888" /><path d="M5 10 Q11 1 15 8 L21 18 L12 10 Z" fill="#333a" /></>, mark: 'k' },
  { art: <Speckle seed={25} n={80} rx={13} ry={13} even />, mark: '' },
  { art: <Speckle seed={26} n={130} rx={4} ry={11} color="#4448" size={1.5} />, mark: 'r' },
  { art: <Speckle seed={27} n={22} rx={3} ry={12} size={2} even />, mark: 'r' },
  { art: <path d="M4 14 L22 30 M4 9 L26 28 M7 6 L29 25 M12 5 L31 21 M17 5 L32 17" stroke="#111" />, mark: 'k' },
  { art: <rect x="16" y="16" width="1" height="1" fill="#000" />, mark: '' },
  { art: <path d="M3 3 Q14 8 30 3 V8 Q20 12 3 8 Z M2 14 Q18 16 31 16 Q30 22 18 21 Q8 20 2 19 Z M5 25 Q12 24 22 31 Q12 33 5 25 M26 24 L31 30 L20 26 Z" fill="#8f8f8f" />, mark: 'k' },
  { art: <Speckle seed={31} n={500} rx={14} ry={14} color="#5556" size={1.5} />, mark: 'k' },
  { art: <><defs><radialGradient id="sun"><stop offset="0" stopColor="#fffdb0" /><stop offset=".45" stopColor="#fff04a" /><stop offset=".6" stopColor="#f8b880" /><stop offset="1" stopColor="#f8b09000" /></radialGradient></defs><circle cx="16" cy="17" r="15" fill="url(#sun)" /></>, mark: 'r' },
  { art: <Speckle seed={33} n={45} rx={13} ry={12} size={1.5} even />, mark: 'r' },
  { art: <Speckle seed={34} n={100} rx={13} ry={11} size={1.3} />, mark: 'r' },
  { art: <Speckle seed={35} n={200} rx={15} ry={14} even />, mark: '' },
  { art: <Speckle seed={36} n={220} rx={15} ry={13} even color="#444" />, mark: '' },
  { art: <ellipse cx="17" cy="14" rx="8" ry="5" fill="#222" />, mark: '' },
  { art: <Speckle seed={38} n={230} rx={12} ry={12} even color="#555" />, mark: '' },
  { art: <Speckle seed={39} n={160} rx={10} ry={10} even color="#777" />, mark: '' },
  { art: <Speckle seed={40} n={170} rx={12} ry={11} size={2} />, mark: '' },
];

const BrushGrid = () => (
  <div className="flex h-[252px] border border-[#a9a9b0] bg-white">
    <div className="grid flex-1 auto-rows-[34px] grid-cols-[repeat(6,34px)] content-start overflow-hidden pl-px pt-px">
      {brushes.map((b, i) => (
        <svg key={i} width="34" height="34" viewBox="0 0 34 34" aria-hidden="true">
          {b.art}
          {b.mark === 'b' && <path d="M29 34 H34 V29 Z" fill="#8c9cf0" />}
          {(b.mark === 'r' || b.mark === 't') && <path d="M29 34 H34 V29 Z" fill="#f08080" />}
          {b.mark !== '' && b.mark !== 't' && <path d="M31.500 28 V33 M29 30.500 H34" stroke="#000" />}
        </svg>
      ))}
    </div>
    <div className="mr-[2px] flex w-4 flex-col items-center bg-[#ececec]">
      <button aria-label="위로" className="flex h-[18px] items-center"><Arrow dir="up" size={7} color="#888" /></button>
      <div className="flex h-[172px] w-[15px] items-center justify-center border border-[#8c8c8c] bg-linear-to-r from-white to-[#c4c4c8]">
        <span className="rotate-90">{grip}</span>
      </div>
      <div className="flex-1" />
      <button aria-label="아래로" className="flex h-[18px] items-center"><Arrow size={7} color="#555" /></button>
    </div>
  </div>
);

const LayersTabs = () => (
  <div className="flex h-[30px] shrink-0 items-end">
    <button aria-label="레이어" className="flex h-[30px] w-[33px] items-center justify-center border-l border-r border-t border-[#85858f] bg-white">
      <Svg size={24}><path d="M6 15 H22 L18 22 H1 Z M6 11 H22 L18 18 H1 Z" fill="#e4e4e2" stroke="#8b8d88" /><path d="M6 3 H23 L18 13 H2 Z" fill="#f2f2f0" stroke="#8b8d88" /></Svg>
    </button>
    {[
      { name: '채널', w: 'w-[28px]', art: <><path d="M5 14 H23 L19 22 H1 Z" fill="#4f80c0" stroke={navy} /><path d="M5 10 H23 L19 18 H1 Z" fill="#73c216" stroke="#3f6c06" /><path d="M5 2 H23 L19 14 H1 Z" fill="#e01818" stroke="#8a0000" /></> },
      { name: '경로', w: 'w-[29px]', art: <><path d="M1 12 Q6 3 14 3 M2 9 Q12 10 21 22 M9 6 Q12 12 12 22 M4 21 Q12 14 17 15 M22 2 Q24 12 15 17" stroke="#4a76b4" strokeWidth="1.200" /><path d="M6 6 h3 v3 h-3 z M1 10 h2 v2 h-2 z M11 9 h2 v2 h-2 z M11 17 h3 v3 h-3 z M18 10 h3 v3 h-3 z M13 2 h2 v2 h-2 z" fill="#222" /></> },
      { name: '되돌리기', w: 'w-[29px]', art: <><path d="M14 3 Q27 6 20 21 Q22 11 12 8" fill="#f8ec9c" stroke="#d4b830" /><path d="M9 2 V6 Q20 7 17 20 Q16 12 9 12 V17 L1 9 Z" fill="#f4dc50" stroke="#c09b10" /></> },
      { name: '선택', w: 'w-[22px]', art: <rect x="2" y="2" width="20" height="20" fill="#f25050" stroke="#f9b0b0" strokeWidth="1.500" strokeDasharray="2 1" /> },
    ].map((t) => (
      <button key={t.name} aria-label={t.name} className={`flex h-[28px] ${t.w} items-center justify-center overflow-hidden border-b border-r border-t border-[#85858f] bg-linear-to-b from-[#f2f2f2] to-[#d5d5da]`}>
        <Svg size={t.name === '선택' ? 17 : 24}>{t.art}</Svg>
      </button>
    ))}
    <div className="flex h-full flex-1 items-center justify-end border-b border-[#85858f] pr-[6px]"><Collapse /></div>
  </div>
);

const RightDock = () => (
  <aside className="flex w-[241px] shrink-0 flex-col text-[11px] leading-4">
    <LayersTabs />
    <section className="flex h-[602px] flex-col border-b border-x border-[#85858f] bg-white px-[3px] pt-[3px]">
      <div className="flex h-5 items-center gap-3">
        <label htmlFor="layerMode" className="whitespace-nowrap">모드:</label>
        <Combo id="layerMode" value="일반" framed={false} />
      </div>
      <div className="mt-[2px] flex"><Spin label="불투명" value="100.0" fill="bg-[#b6c3cd] border-r border-black" upColor="#aaa" /></div>
      <div className="flex h-6 items-center gap-[2px]">
        <span>잠그기:</span>
        <button aria-label="픽셀 잠그기"><Svg size={16}>{tools[24].art}</Svg></button>
        <button aria-label="알파 잠그기" className="ml-1"><CheckerIcon /></button>
      </div>
      <div className="min-h-0 flex-1 border border-[#a9a9b0] bg-white p-px">
        <div className="flex h-10 items-center bg-[#3399ff] pl-[74px] text-white">
          <span className="flex h-[34px] w-[25px] border-2 border-white bg-[repeating-conic-gradient(#666_0_25%,#999_0_50%)] bg-[length:8px_8px]" />
          <span className="ml-[2px] border border-dotted border-[#e08030] px-px text-[12px]">그림자</span>
        </div>
      </div>
      <div className="flex h-[22px] shrink-0 items-center justify-end gap-[18px] pr-[10px]">
        <button aria-label="레이어 복제"><DuplicateIcon /></button>
        <button aria-label="레이어 고정"><AnchorIcon /></button>
        <button aria-label="레이어 삭제"><TrashIcon /></button>
      </div>
    </section>

    <div className="mt-2 flex h-[26px] shrink-0 items-stretch">
      <div className="flex w-[43px] items-end border-l border-t border-[#85858f] bg-white pl-[2px]">
        <svg width="22" height="23" viewBox="0 0 22 23" aria-hidden="true"><rect x=".5" y=".5" width="21" height="22" fill="#fff" stroke="#000" /><path d="M15 21 H21 V15 Z" fill="#7c90ee" /></svg>
      </div>
      <div className="flex w-12 items-end border-r border-t border-[#85858f]">
        <span className="h-6 w-[22px] border border-black bg-[#fcc45c]" />
      </div>
      <div className="flex w-20 items-center gap-[2px] border-b border-r border-t border-[#85858f] bg-linear-to-b from-[#ededed] to-[#d5d5da]">
        <span className="h-6 w-[22px] shrink-0 border border-black bg-linear-to-r from-black to-white" />
        <span className="whitespace-nowrap">그라디언트</span>
      </div>
      <div className="flex flex-1 items-center justify-end border-b border-[#85858f] pr-[5px]"><Collapse /></div>
    </div>
    <section className="flex min-h-0 flex-1 flex-col border-x border-[#85858f] bg-white px-[3px] pt-1">
      <div className="flex h-5 shrink-0 items-center border border-[#a9a9b0] pr-[7px]">
        <input aria-label="필터" placeholder="필터" className="min-w-0 flex-1 pl-1 italic outline-none placeholder:text-[#666]" />
        <button aria-label="필터 목록"><Arrow size={8} /></button>
      </div>
      <p className="h-4 shrink-0 italic">1. Pixel (3 × 3)</p>
      <BrushGrid />
      <div className="mt-[3px] flex h-5 shrink-0"><Combo id="tag" value="Basic," boxed={false} /></div>
      <div className="mt-[2px] flex"><Spin label="간격" value="1.0" downColor="#aaa" /></div>
      <div className="flex min-h-0 flex-1 items-center justify-around">
        <button aria-label="편집"><EditIcon /></button>
        <button aria-label="새 붓"><NewIcon /></button>
        <button aria-label="복제"><DuplicateIcon /></button>
        <button aria-label="삭제"><TrashIcon dim /></button>
        <button aria-label="새로고침">
          <Svg size={16}><path d="M3 10 Q6 2 15 4 L18 6 L21 3 V11 H13 L16 8 Q8 5 7 10 Z M21 14 Q18 22 9 20 L6 18 L3 21 V13 H11 L8 16 Q16 19 17 14 Z" fill="#7ba5d6" stroke="#3465a4" strokeWidth="1.500" /></Svg>
        </button>
      </div>
    </section>
  </aside>
);

/* ---------- context menu ---------- */

type Entry = { text: string; key: string; dots?: boolean; h: string; icon?: React.ReactNode; off?: boolean; active?: boolean };

const groups: Entry[][] = [
  [{ text: '레이어 속성 편집', key: 'E', dots: true, h: 'h-6', icon: <EditIcon /> }],
  [
    { text: '새 레이어', key: 'N', dots: true, h: 'h-5', icon: <NewIcon /> },
    { text: '보이는 영역에서 새로 만들기', key: 'V', h: 'h-[18px]' },
    { text: '새 레이어 그룹', key: 'G', dots: true, h: 'h-5', icon: <FolderIcon /> },
    { text: '레이어 복제', key: 'U', h: 'h-[22px]', icon: <DuplicateIcon />, active: true },
    { text: '레이어 고정', key: 'A', h: 'h-[22px]', icon: <AnchorIcon />, off: true },
    { text: '아래로 합치기', key: 'W', h: 'h-[22px]', icon: <MergeIcon /> },
    { text: '레이어 삭제', key: 'D', h: 'h-[22px]', icon: <TrashIcon /> },
  ],
  [
    { text: '레이어경계 크기', key: 'O', dots: true, h: 'h-6', icon: <BoundsIcon /> },
    { text: '레이어를 이미지 크기로', key: 'I', h: 'h-6', icon: <FitIcon /> },
    { text: '레이어 크기조정', key: 'S', dots: true, h: 'h-6', icon: <ResizeIcon /> },
  ],
  [
    { text: '레이어 마스크 추가', key: 'Y', dots: true, h: 'h-[22px]', icon: <MaskIcon /> },
    { text: '레이어마스크 적용', key: 'M', h: 'h-5', off: true },
    { text: '레이어 마스크 삭제', key: 'K', h: 'h-5', icon: <TrashIcon dim />, off: true },
  ],
  [
    { text: '레이어 마스크 보이기', key: 'H', h: 'h-[22px]', off: true },
    { text: '레이어 마스크 편집', key: 'E', h: 'h-5', off: true },
    { text: '레이어 마스크 비활성화', key: 'D', h: 'h-[22px]', off: true },
    { text: '마스크를 선택 영역으로', key: 'M', h: 'h-[22px]', icon: <SelIcon dim />, off: true },
  ],
  [
    { text: '알파 채널 추가', key: 'H', h: 'h-[22px]', icon: <CheckerIcon dim />, off: true },
    { text: '알파 채널 제거', key: 'R', h: 'h-5' },
    { text: '알파를 선택 영역으로', key: 'P', h: 'h-5', icon: <SelIcon /> },
  ],
  [
    { text: '보이는 레이어 합치기', key: 'V', dots: true, h: 'h-[18px]' },
    { text: '이미지 평탄화', key: 'F', h: 'h-[18px]' },
  ],
];

const ContextMenu = () => (
  <div role="menu" className="absolute top-[160px] right-[109px] z-10 w-[236px] border border-[#8c8c8c] bg-[#efefef] pb-[2px] text-[13px] leading-4 shadow-[4px_4px_4px_rgba(0,0,0,0.5)]">
    {groups.map((group, g) => (
      <div key={g}>
        {g > 0 && <div className="mx-[5px] flex h-2 items-center"><div className="h-[2px] flex-1 border-b border-white bg-[#d8d8d8]" /></div>}
        {group.map((item) => (
          <button
            key={item.text}
            role="menuitem"
            disabled={item.off}
            className={`relative flex w-full items-center whitespace-nowrap text-left ${item.h} ${item.off ? 'text-[#808080] [text-shadow:1px_1px_0_#fff]' : ''}`}
          >
            {item.active && <span className="absolute inset-x-[1px] inset-y-0 rounded-xs border border-[#a8b4dc]" />}
            <span className="flex w-[30px] items-center pl-[5px]">{item.icon}</span>
            <span className="-mr-2">{item.text}(<u className="underline-offset-2">{item.key}</u>){item.dots && '...'}</span>
            {item.active && <span className="absolute -inset-x-[6px] -top-px h-[25px] bg-[rgba(255,66,66,0.35)]" />}
          </button>
        ))}
      </div>
    ))}
  </div>
);

/* ---------- frame ---------- */

const menus = [
  ['파일', 'F'], ['편집', 'E'], ['선택', 'S'], ['보기', 'V'], ['이미지', 'I'], ['레이어', 'L'],
  ['색', 'C'], ['도구', 'T'], ['필터', 'R'], ['창', 'W'], ['도움말', 'H'],
];

const App: React.FC = () => (
  <div className="relative flex h-screen flex-col overflow-hidden bg-[#efefef] font-['Noto_Sans','Noto_Sans_CJK_KR',sans-serif] text-black">
    <header className="flex h-[22px] shrink-0 items-center border-t border-[#3a3f48] bg-linear-to-b from-[#98b4d4] to-[#b8d0ea] pl-1">
      <span className="flex h-4 w-[11px] justify-center bg-white pt-[3px]"><span className="h-2 w-[6px] bg-black" /></span>
      <h1 className="ml-[11px] flex-1 text-[13px] leading-5 font-['Open_Sans','Noto_Sans_CJK_KR',sans-serif]">*[제목없음]-4.0 (RGB 색상, 레이어 2 개) 400x600 – 김프</h1>
      <div className="flex gap-[2px] pr-[2px]">
        <button aria-label="최소화" className="flex h-[17px] w-[31px] items-center justify-center rounded-xs border border-[#5c7290] bg-linear-to-b from-[#c5d7eb] to-[#9db9d8]">
          <svg width="12" height="6" viewBox="0 0 12 6"><rect x=".5" y="1.500" width="11" height="4" rx="1" fill="#fff" stroke="#44546a" /></svg>
        </button>
        <button aria-label="이전 크기로" className="flex h-[17px] w-[31px] items-center justify-center rounded-xs border border-[#5c7290] bg-linear-to-b from-[#c5d7eb] to-[#9db9d8]">
          <svg width="12" height="12" viewBox="0 0 12 12" fill="#fff" stroke="#44546a"><rect x="4.500" y=".5" width="7" height="7" /><rect x=".5" y="4.500" width="7" height="7" /><rect x="2.500" y="6.500" width="3" height="3" fill="#9db9d8" /></svg>
        </button>
        <button aria-label="닫기" className="flex h-[17px] w-[31px] items-center justify-center rounded-xs border border-[#6b1f1a] bg-linear-to-b from-[#dd9a8c] via-[#c0432f] to-[#c96a55]">
          <svg width="12" height="10" viewBox="0 0 12 10"><path d="M2 1 L10 9 M10 1 L2 9" stroke="#5a3a3a" strokeWidth="4" /><path d="M2 1 L10 9 M10 1 L2 9" stroke="#fff" strokeWidth="2" /></svg>
        </button>
      </div>
    </header>
    <nav className="flex h-5 shrink-0 items-center gap-4 border-b border-[#b3bbda] bg-[linear-gradient(#fff_20%,#e4e9f6_40%,#d6ddf0_55%,#e0e6f8)] pl-2 text-[13px] leading-4">
      {menus.map(([label, key]) => (
        <button key={label} className="whitespace-nowrap">{label}(<u className="underline-offset-2">{key}</u>)</button>
      ))}
    </nav>
    <div className="flex min-h-0 flex-1">
      <LeftDock />
      <ImageWindow />
      <RightDock />
    </div>
    <footer className="h-[2px] shrink-0 border-t border-[#3e4a5e] bg-[#b8c8dc]" />
    <ContextMenu />
  </div>
);

export default App;
